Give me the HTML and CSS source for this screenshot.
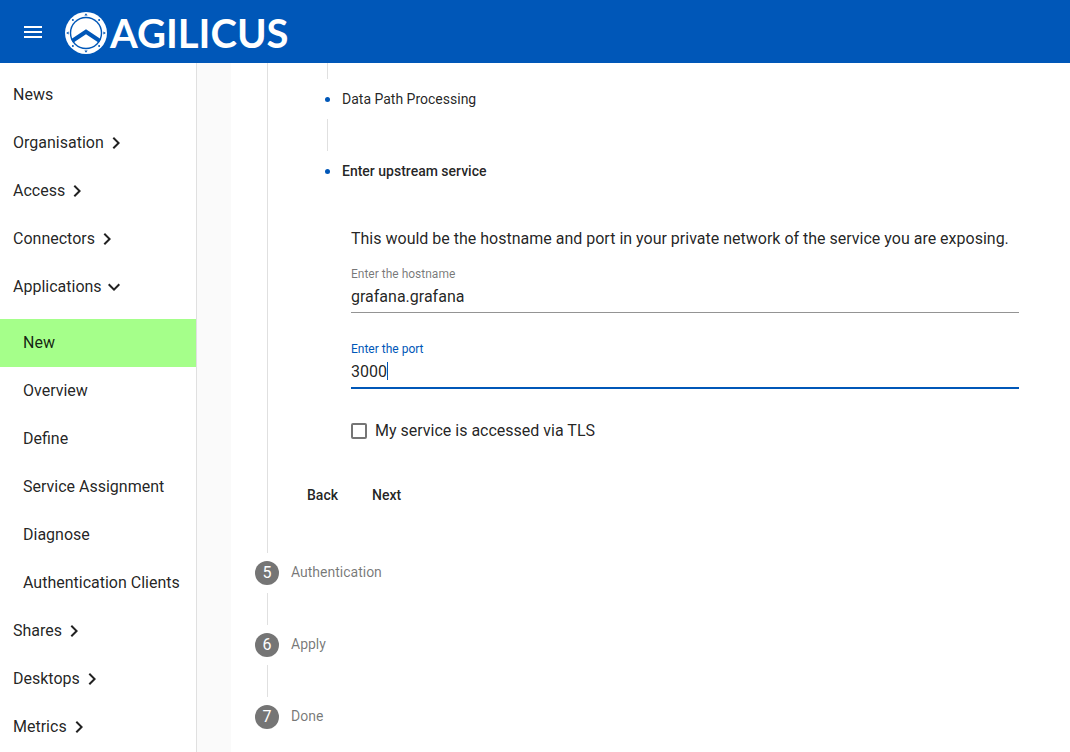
FILE: index.html
```html
<!DOCTYPE html>
<html lang="en">
<head>
    <meta charset="UTF-8">
    <meta name="viewport" content="width=device-width, initial-scale=1.0">
    <title>Agilicus - New Application</title>
    <link rel="stylesheet" href="styles.css">
</head>
<body>
    <svg class="sprite" aria-hidden="true">
        <symbol id="chevron-right" viewBox="0 0 24 24">
            <path d="M10 6L8.59 7.41 13.17 12l-4.58 4.59L10 18l6-6z"/>
        </symbol>
        <symbol id="chevron-down" viewBox="0 0 24 24">
            <path d="M16.59 8.59L12 13.17 7.41 8.59 6 10l6 6 6-6z"/>
        </symbol>
    </svg>

    <header class="toolbar">
        <button type="button" class="menu-button" aria-label="Toggle menu">
            <svg viewBox="0 0 24 24"><path d="M3 18h18v-2H3v2zm0-5h18v-2H3v2zm0-7v2h18V6H3z"/></svg>
        </button>
        <a href="#" class="logo">
            <svg class="logo-mark" viewBox="0 0 42 42" aria-hidden="true">
                <circle cx="21" cy="21" r="21" fill="#fff"/>
                <circle cx="21" cy="21" r="16.2" fill="#0057b8"/>
                <circle cx="21" cy="21" r="14.8" fill="#fff"/>
                <path d="M21 17.2L6 27.2l2.2 3.6L21 22.2l12.8 8.6 2.2-3.6z" fill="#0057b8"/>
                <g fill="#0057b8">
                    <path d="M21 1.2l1.6 2.4h-3.2z"/>
                    <path d="M21 40.8l1.6-2.4h-3.2z"/>
                    <path d="M1.2 21l2.4-1.6v3.2z"/>
                    <path d="M40.8 21l-2.4-1.6v3.2z"/>
                    <circle cx="7.9" cy="7.9" r="1"/>
                    <circle cx="34.1" cy="7.9" r="1"/>
                    <circle cx="7.9" cy="34.1" r="1"/>
                    <circle cx="34.1" cy="34.1" r="1"/>
                </g>
            </svg>
            <span class="logo-text">AGILICUS</span>
        </a>
    </header>

    <div class="layout">
        <nav class="sidebar">
            <a href="#" class="nav-item">News</a>
            <a href="#" class="nav-item">Organisation<svg><use href="#chevron-right"/></svg></a>
            <a href="#" class="nav-item">Access<svg><use href="#chevron-right"/></svg></a>
            <a href="#" class="nav-item">Connectors<svg><use href="#chevron-right"/></svg></a>
            <a href="#" class="nav-item">Applications<svg><use href="#chevron-down"/></svg></a>
            <div class="subnav">
                <a href="#" class="nav-item active">New</a>
                <a href="#" class="nav-item">Overview</a>
                <a href="#" class="nav-item">Define</a>
                <a href="#" class="nav-item">Service Assignment</a>
                <a href="#" class="nav-item">Diagnose</a>
                <a href="#" class="nav-item">Authentication Clients</a>
            </div>
            <a href="#" class="nav-item">Shares<svg><use href="#chevron-right"/></svg></a>
            <a href="#" class="nav-item">Desktops<svg><use href="#chevron-right"/></svg></a>
            <a href="#" class="nav-item">Metrics<svg><use href="#chevron-right"/></svg></a>
        </nav>

        <main class="content">
            <div class="stepper">
                <div class="step-body">
                    <div class="substeps">
                        <div class="line line-short"></div>
                        <div class="substep"><span class="dot"></span>Data Path Processing</div>
                        <div class="line"></div>
                        <div class="substep current"><span class="dot"></span>Enter upstream service</div>
                    </div>

                    <form class="service-form">
                        <p>This would be the hostname and port in your private network of the service you are exposing.</p>

                        <div class="field">
                            <label for="hostname">Enter the hostname</label>
                            <input type="text" id="hostname" name="hostname" value="grafana.grafana">
                        </div>

                        <div class="field focused">
                            <label for="port">Enter the port</label>
                            <input type="text" id="port" name="port" value="3000">
                            <span class="caret"></span>
                        </div>

                        <div class="check">
                            <input type="checkbox" id="tls" name="tls">
                            <label for="tls">My service is accessed via TLS</label>
                        </div>
                    </form>

                    <div class="actions">
                        <button type="button">Back</button>
                        <button type="button">Next</button>
                    </div>
                </div>

                <div class="step"><span class="number">5</span><span class="step-label">Authentication</span></div>
                <div class="line"></div>
                <div class="step"><span class="number">6</span><span class="step-label">Apply</span></div>
                <div class="line"></div>
                <div class="step"><span class="number">7</span><span class="step-label">Done</span></div>
            </div>
        </main>
    </div>
</body>
</html>
```

FILE: styles.css
```css
* {
    box-sizing: border-box;
}

body {
    margin: 0;
    min-height: 100vh;
    display: flex;
    flex-direction: column;
    font-family: Roboto, "Liberation Sans", sans-serif;
    font-size: 16px;
    line-height: 24px;
    color: rgba(0, 0, 0, 0.87);
    background-color: #fafafa;
}

a {
    color: inherit;
    text-decoration: none;
}

button {
    border: none;
    background: none;
    color: inherit;
    font-family: inherit;
    cursor: pointer;
}

.sprite {
    display: none;
}

/* Top bar */
.toolbar {
    display: flex;
    align-items: center;
    height: 63px;
    padding: 0 21px;
    background-color: #0057b8;
    color: white;
}

.menu-button {
    width: 24px;
    height: 24px;
    padding: 0;
}

.menu-button svg {
    display: block;
    fill: currentColor;
}

.logo {
    display: flex;
    align-items: center;
    gap: 3px;
    padding-top: 2px;
    margin-left: 20px;
}

.logo-mark {
    width: 42px;
    height: 42px;
}

.logo-text {
    font-family: Lato, sans-serif;
    font-size: 40px;
    font-weight: 700;
    line-height: 48px;
}

/* Layout */
.layout {
    display: flex;
    flex: 1;
}

.sidebar {
    flex: none;
    width: 197px;
    padding-top: 8px;
    border-right: 1px solid #e0e0e0;
    background-color: white;
}

.nav-item {
    display: flex;
    align-items: center;
    height: 48px;
    padding-left: 13px;
}

.nav-item svg {
    width: 24px;
    height: 24px;
    fill: currentColor;
}

.subnav {
    padding-top: 8px;
}

.subnav .nav-item {
    padding-left: 23px;
}

.nav-item.active {
    background-color: #a5ff8a;
}

.content {
    flex: 1;
    padding-left: 34px;
}

/* Stepper */
.stepper {
    min-height: 100%;
    padding-left: 24px;
    background-color: white;
}

.step-body {
    margin-left: 12px;
    padding: 0 51px 40px 39px;
    border-left: 1px solid #e0e0e0;
}

.line {
    height: 32px;
    margin-left: 12px;
    border-left: 1px solid #e0e0e0;
}

.step {
    display: flex;
    align-items: center;
    gap: 12px;
    height: 40px;
    font-size: 14px;
    color: rgba(0, 0, 0, 0.54);
}

.step-label {
    padding-bottom: 2px;
}

.number {
    width: 24px;
    height: 24px;
    border-radius: 50%;
    background-color: #757575;
    color: white;
    font-size: 16px;
    text-align: center;
}

.substeps {
    padding-left: 18px;
}

.substeps .line {
    margin-left: 2px;
}

.substeps .line-short {
    height: 16px;
}

.substep {
    display: flex;
    align-items: center;
    gap: 12px;
    height: 40px;
    font-size: 14px;
}

.substep.current {
    font-weight: 500;
}

.dot {
    width: 5px;
    height: 5px;
    border-radius: 50%;
    background-color: #0057b8;
}

/* Form */
.service-form {
    padding: 36px 0 0 44px;
}

.service-form p {
    margin: 0 0 15px;
}

.field {
    position: relative;
    margin-bottom: 28px;
    border-bottom: 1px solid #949494;
}

.field label {
    display: block;
    font-size: 12px;
    line-height: 16px;
    color: rgba(0, 0, 0, 0.54);
}

.field input {
    display: block;
    width: 100%;
    height: 30px;
    padding: 0 0 2px;
    border: none;
    outline: none;
    background: none;
    color: inherit;
    font: inherit;
}

.field.focused {
    border-bottom: 2px solid #0057b8;
}

.field.focused label {
    color: #0057b8;
}

/* text cursor after the typed port */
.caret {
    position: absolute;
    top: 21px;
    left: 36px;
    width: 1px;
    height: 18px;
    background-color: #0057b8;
}

.check {
    display: flex;
    align-items: center;
    gap: 8px;
    padding-top: 2px;
}

.check input {
    appearance: none;
    width: 16px;
    height: 16px;
    margin: 0;
    border: 2px solid #757575;
    border-radius: 2px;
}

.check input:checked {
    background-color: #0057b8;
}

.actions {
    display: flex;
    gap: 2px;
    margin-top: 34px;
    margin-left: -16px;
}

.actions button {
    height: 36px;
    padding: 0 16px;
    font-size: 14px;
    font-weight: 500;
}
```
